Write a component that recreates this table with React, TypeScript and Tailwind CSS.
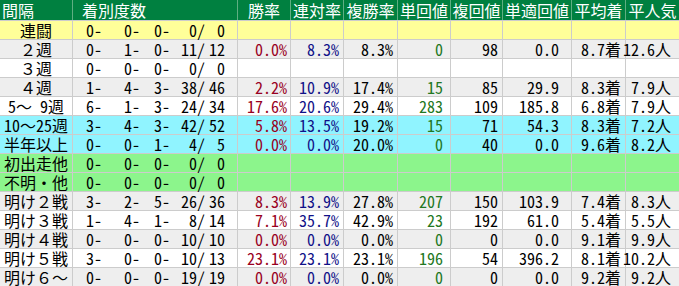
import React from 'react'

type Row = {
  label: string
  bg: string
  counts: string[]
  win?: string
  ren?: string
  fuku?: string
  tan?: string
  fukuv?: string
  tanTeki?: string
  avg?: string
  pop?: string
}

const rows: Row[] = [
  { label: '連闘', bg: 'bg-[#ffff99]', counts: ['0-', '0-', '0-', '0/', '0'] },
  { label: '２週', bg: 'bg-[#eeeeee]', counts: ['0-', '1-', '0-', '11/', '12'], win: '0.0%', ren: '8.3%', fuku: '8.3%', tan: '0', fukuv: '98', tanTeki: '0.0', avg: '8.7着', pop: '12.6人' },
  { label: '３週', bg: 'bg-white', counts: ['0-', '0-', '0-', '0/', '0'] },
  { label: '４週', bg: 'bg-[#eeeeee]', counts: ['1-', '4-', '3-', '38/', '46'], win: '2.2%', ren: '10.9%', fuku: '17.4%', tan: '15', fukuv: '85', tanTeki: '29.9', avg: '8.3着', pop: '7.9人' },
  { label: '5〜 9週', bg: 'bg-white', counts: ['6-', '1-', '3-', '24/', '34'], win: '17.6%', ren: '20.6%', fuku: '29.4%', tan: '283', fukuv: '109', tanTeki: '185.8', avg: '6.8着', pop: '7.9人' },
  { label: '10〜25週', bg: 'bg-[#90f4ff]', counts: ['3-', '4-', '3-', '42/', '52'], win: '5.8%', ren: '13.5%', fuku: '19.2%', tan: '15', fukuv: '71', tanTeki: '54.3', avg: '8.3着', pop: '7.2人' },
  { label: '半年以上', bg: 'bg-[#90f4ff]', counts: ['0-', '0-', '1-', '4/', '5'], win: '0.0%', ren: '0.0%', fuku: '20.0%', tan: '0', fukuv: '40', tanTeki: '0.0', avg: '9.6着', pop: '8.2人' },
  { label: '初出走他', bg: 'bg-[#8cf58c]', counts: ['0-', '0-', '0-', '0/', '0'] },
  { label: '不明・他', bg: 'bg-[#8cf58c]', counts: ['0-', '0-', '0-', '0/', '0'] },
  { label: '明け２戦', bg: 'bg-[#eeeeee]', counts: ['3-', '2-', '5-', '26/', '36'], win: '8.3%', ren: '13.9%', fuku: '27.8%', tan: '207', fukuv: '150', tanTeki: '103.9', avg: '7.4着', pop: '8.3人' },
  { label: '明け３戦', bg: 'bg-white', counts: ['1-', '4-', '1-', '8/', '14'], win: '7.1%', ren: '35.7%', fuku: '42.9%', tan: '23', fukuv: '192', tanTeki: '61.0', avg: '5.4着', pop: '5.5人' },
  { label: '明け４戦', bg: 'bg-[#eeeeee]', counts: ['0-', '0-', '0-', '10/', '10'], win: '0.0%', ren: '0.0%', fuku: '0.0%', tan: '0', fukuv: '0', tanTeki: '0.0', avg: '9.1着', pop: '9.9人' },
  { label: '明け５戦', bg: 'bg-white', counts: ['3-', '0-', '0-', '10/', '13'], win: '23.1%', ren: '23.1%', fuku: '23.1%', tan: '196', fukuv: '54', tanTeki: '396.2', avg: '8.1着', pop: '10.2人' },
  { label: '明け６〜', bg: 'bg-[#eeeeee]', counts: ['0-', '0-', '0-', '19/', '19'], win: '0.0%', ren: '0.0%', fuku: '0.0%', tan: '0', fukuv: '0', tanTeki: '0.0', avg: '9.2着', pop: '9.2人' },
]

const cols = 'grid grid-cols-[73px_165px_53px_53px_54px_53px_52px_69px_54px_53px]'
const countW = ['w-[29px]', 'w-[38px]', 'w-[30px]', 'w-[35px]', 'w-[20px]']
const headers = ['勝率', '連対率', '複勝率', '単回値', '複回値', '単適回値', '平均着', '平人気']

export default function App() {
  return (
    <div
      className="w-[679px] h-[286px] overflow-hidden bg-white text-[16px] leading-[18px] text-black"
      style={{ fontFamily: '"Noto Sans Mono CJK JP", "Noto Sans CJK JP", monospace' }}
    >
      {/* header */}
      <div className={`${cols} h-[20px] bg-[#008040] text-white`}>
        <div className="border-r border-[#5fae82] pl-[2px] flex items-center">間隔</div>
        <div className="border-r border-[#5fae82] pl-[9px] flex items-center">着別度数</div>
        {headers.map((h) => (
          <div key={h} className="border-r border-[#5fae82] flex items-center justify-center last:border-r-0 whitespace-nowrap">
            {h}
          </div>
        ))}
      </div>

      {rows.map((r) => (
        <div key={r.label} className={`${cols} h-[19px] border-t border-[#cccccc] ${r.bg}`}>
          <div className="border-r border-[#cccccc] flex items-center justify-center whitespace-pre">{r.label}</div>
          <div className="border-r border-[#cccccc] flex items-center">
            {r.counts.map((c, i) => (
              <span key={i} className={`${countW[i]} text-right whitespace-nowrap`}>{c}</span>
            ))}
          </div>
          <div className="border-r border-[#cccccc] flex items-center justify-end pr-[3px] text-[#990022]">{r.win}</div>
          <div className="border-r border-[#cccccc] flex items-center justify-end pr-[4px] text-[#111188]">{r.ren}</div>
          <div className="border-r border-[#cccccc] flex items-center justify-end pr-[4px]">{r.fuku}</div>
          <div className="border-r border-[#cccccc] flex items-center justify-end pr-[7px] text-[#227722]">{r.tan}</div>
          <div className="border-r border-[#cccccc] flex items-center justify-end pr-[4px]">{r.fukuv}</div>
          <div className="border-r border-[#cccccc] flex items-center justify-end pr-[12px]">{r.tanTeki}</div>
          <div className="border-r border-[#cccccc] flex items-center justify-end pr-[4px] whitespace-nowrap">{r.avg}</div>
          <div className="flex items-center justify-end pr-[8px] whitespace-nowrap">{r.pop}</div>
        </div>
      ))}
    </div>
  )
}
